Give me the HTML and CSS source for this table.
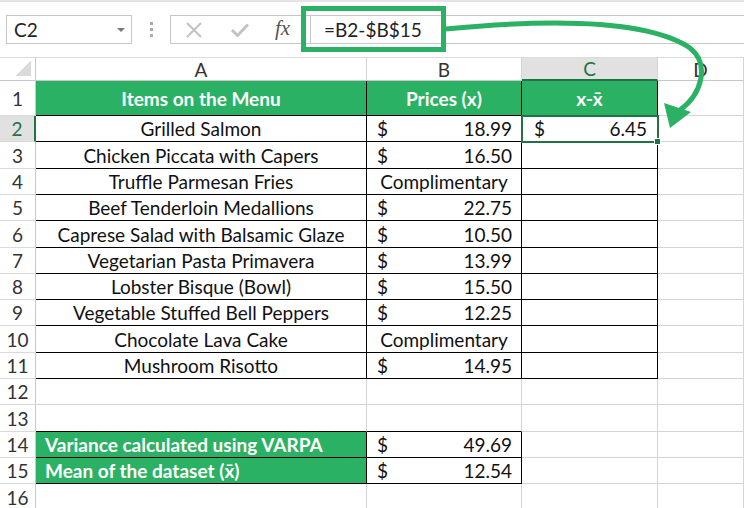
FILE: index.html
```html
<!DOCTYPE html>
<html lang="en">
<head>
    <meta charset="UTF-8">
    <title>Variance sheet</title>
    <link rel="stylesheet" href="styles.css">
</head>
<body>

<div class="app">
    <!-- formula bar -->
    <div class="formula-bar">
        <div class="name-box">
            <span>C2</span>
            <span class="caret"></span>
        </div>
        <div class="grip"><i></i><i></i><i></i></div>
        <div class="fx-tools">
            <svg class="tool" width="16" height="16" viewBox="0 0 16 16">
                <path d="M1 1 L15 15 M15 1 L1 15" stroke="#c2c2c2" stroke-width="2" fill="none"/>
            </svg>
            <svg class="tool" width="18" height="14" viewBox="0 0 18 14">
                <path d="M1 7 L6.5 12.5 L17 1.5" stroke="#c2c2c2" stroke-width="3" fill="none"/>
            </svg>
            <span class="fx">fx</span>
        </div>
        <div class="formula-input">=B2-$B$15</div>
    </div>

    <!-- sheet -->
    <div class="sheet">
        <div class="corner"></div>
        <div class="col-head">A</div>
        <div class="col-head">B</div>
        <div class="col-head active">C</div>
        <div class="col-head">D</div>

        <div class="row-head">1</div>
        <div class="c head b">Items on the Menu</div>
        <div class="c head b">Prices (x)</div>
        <div class="c head b">x-x&#772;</div>
        <div class="c"></div>

        <div class="row-head active">2</div>
        <div class="c b">Grilled Salmon</div>
        <div class="c b money"><span>$</span><span>18.99</span></div>
        <div class="c b money selected"><span>$</span><span>6.45</span></div>
        <div class="c"></div>

        <div class="row-head">3</div>
        <div class="c b">Chicken Piccata with Capers</div>
        <div class="c b money"><span>$</span><span>16.50</span></div>
        <div class="c b"></div>
        <div class="c"></div>

        <div class="row-head">4</div>
        <div class="c b">Truffle Parmesan Fries</div>
        <div class="c b">Complimentary</div>
        <div class="c b"></div>
        <div class="c"></div>

        <div class="row-head">5</div>
        <div class="c b">Beef Tenderloin Medallions</div>
        <div class="c b money"><span>$</span><span>22.75</span></div>
        <div class="c b"></div>
        <div class="c"></div>

        <div class="row-head">6</div>
        <div class="c b">Caprese Salad with Balsamic Glaze</div>
        <div class="c b money"><span>$</span><span>10.50</span></div>
        <div class="c b"></div>
        <div class="c"></div>

        <div class="row-head">7</div>
        <div class="c b">Vegetarian Pasta Primavera</div>
        <div class="c b money"><span>$</span><span>13.99</span></div>
        <div class="c b"></div>
        <div class="c"></div>

        <div class="row-head">8</div>
        <div class="c b">Lobster Bisque (Bowl)</div>
        <div class="c b money"><span>$</span><span>15.50</span></div>
        <div class="c b"></div>
        <div class="c"></div>

        <div class="row-head">9</div>
        <div class="c b">Vegetable Stuffed Bell Peppers</div>
        <div class="c b money"><span>$</span><span>12.25</span></div>
        <div class="c b"></div>
        <div class="c"></div>

        <div class="row-head">10</div>
        <div class="c b">Chocolate Lava Cake</div>
        <div class="c b">Complimentary</div>
        <div class="c b"></div>
        <div class="c"></div>

        <div class="row-head">11</div>
        <div class="c b">Mushroom Risotto</div>
        <div class="c b money"><span>$</span><span>14.95</span></div>
        <div class="c b"></div>
        <div class="c"></div>

        <div class="row-head">12</div>
        <div class="c"></div>
        <div class="c"></div>
        <div class="c"></div>
        <div class="c"></div>

        <div class="row-head">13</div>
        <div class="c black-bottom"></div>
        <div class="c black-bottom"></div>
        <div class="c"></div>
        <div class="c"></div>

        <div class="row-head">14</div>
        <div class="c b label">Variance calculated using VARPA</div>
        <div class="c b money"><span>$</span><span>49.69</span></div>
        <div class="c"></div>
        <div class="c"></div>

        <div class="row-head">15</div>
        <div class="c b label">Mean of the dataset (x&#772;)</div>
        <div class="c b money"><span>$</span><span>12.54</span></div>
        <div class="c"></div>
        <div class="c"></div>

        <div class="row-head">16</div>
        <div class="c"></div>
        <div class="c"></div>
        <div class="c"></div>
        <div class="c"></div>
    </div>

    <!-- annotation: formula highlight + arrow to C2 -->
    <svg class="annotation" width="744" height="508" viewBox="0 0 744 508">
        <rect x="303.5" y="6.5" width="140" height="41" fill="none" stroke="#2ab163" stroke-width="5"/>
        <path d="M446 27 C 540 18 645 16 690 46 C 710 62 702 92 680 108" fill="none" stroke="#2ab163" stroke-width="5"/>
        <polygon points="670,126 664,101 691,110" fill="#2ab163"/>
    </svg>
</div>

</body>
</html>
```

FILE: styles.css
```css
body {
    margin: 0;
    background: #fff;
    font-family: Lato, "Noto Sans", sans-serif;
    color: #111;
    overflow: hidden;
}
.app {
    position: relative;
    width: 744px;
    height: 508px;
    overflow: hidden;
    border-top: 2px solid #e4e4e4;
    box-sizing: border-box;
}

/* formula bar */
.formula-bar {
    display: flex;
    align-items: center;
    height: 55px;
    padding-left: 6px;
    box-sizing: border-box;
}
.name-box {
    width: 126px;
    height: 29px;
    border: 1px solid #c6c6c6;
    box-sizing: border-box;
    display: flex;
    align-items: center;
    justify-content: space-between;
    padding: 0 6px 0 7px;
    font-size: 19px;
    color: #222;
}
.caret {
    width: 0;
    height: 0;
    border-left: 4px solid transparent;
    border-right: 4px solid transparent;
    border-top: 4px solid #777;
}
.grip {
    width: 38px;
    display: flex;
    flex-direction: column;
    align-items: center;
    gap: 3px;
}
.grip i {
    display: block;
    width: 3px;
    height: 3px;
    background: #aaa;
}
.fx-tools {
    width: 140px;
    height: 29px;
    border: 1px solid #c6c6c6;
    border-right: none;
    box-sizing: border-box;
    display: flex;
    align-items: center;
    padding-left: 15px;
}
.tool {
    display: block;
    margin-right: 29px;
}
.fx {
    font-family: "Liberation Serif", serif;
    font-style: italic;
    font-size: 21px;
    color: #555;
    margin-left: -3px;
    margin-top: -3px;
}
.formula-input {
    flex: 1;
    height: 29px;
    border: 1px solid #c6c6c6;
    border-right: none;
    box-sizing: border-box;
    display: flex;
    align-items: center;
    padding-left: 13px;
    font-size: 19px;
    color: #222;
}

/* sheet grid */
.sheet {
    display: grid;
    grid-template-columns: 36px 331px 155px 136px 86px;
    grid-template-rows: 24px 35px 26px 27px 26px 26px 27px 26px 26px 26px 27px 26px 26px 27px 26px 26px 27px;
}
.corner {
    border-right: 1px solid #c8c8c8;
    border-bottom: 1px solid #c8c8c8;
    border-top: 1px solid #dcdcdc;
    background: linear-gradient(135deg, #fff 62%, #dadada 62%) no-repeat right 4px bottom 4px / 20px 20px;
}
.col-head {
    border-top: 1px solid #dcdcdc;
    border-right: 1px solid #d4d4d4;
    border-bottom: 1px solid #c8c8c8;
    display: flex;
    align-items: center;
    justify-content: center;
    font-size: 19px;
    color: #333;
}
.col-head.active {
    background: #e1e1e1;
    color: #217346;
    border-bottom: 2px solid #217346;
}
.row-head {
    border-right: 1px solid #c8c8c8;
    border-bottom: 1px solid #dadada;
    display: flex;
    align-items: center;
    justify-content: center;
    font-size: 19px;
    color: #333;
}
.row-head.active {
    background: #e1e1e1;
    color: #217346;
    border-right: 2px solid #217346;
}
.c {
    border-right: 1px solid #d4d4d4;
    border-bottom: 1px solid #d4d4d4;
    display: flex;
    align-items: center;
    justify-content: center;
    font-size: 19px;
    white-space: nowrap;
    box-sizing: border-box;
}
.c.b {
    border-color: #000;
}
.c.black-bottom {
    border-bottom-color: #000;
}
.c.head {
    background: #2ab163;
    color: #fff;
    font-weight: bold;
}
.c.label {
    background: #2ab163;
    color: #fff;
    font-weight: bold;
    justify-content: flex-start;
    padding-left: 9px;
}
.c.money {
    justify-content: space-between;
    padding: 0 9px 0 10px;
}
.c.selected {
    position: relative;
    outline: 2px solid #217346;
    outline-offset: -1px;
    padding: 0 10px 0 12px;
}
.c.selected::after {
    content: "";
    position: absolute;
    right: -4px;
    bottom: -4px;
    width: 5px;
    height: 5px;
    background: #217346;
    border: 1px solid #fff;
}

.annotation {
    position: absolute;
    left: 0;
    top: 0;
    pointer-events: none;
}
```
